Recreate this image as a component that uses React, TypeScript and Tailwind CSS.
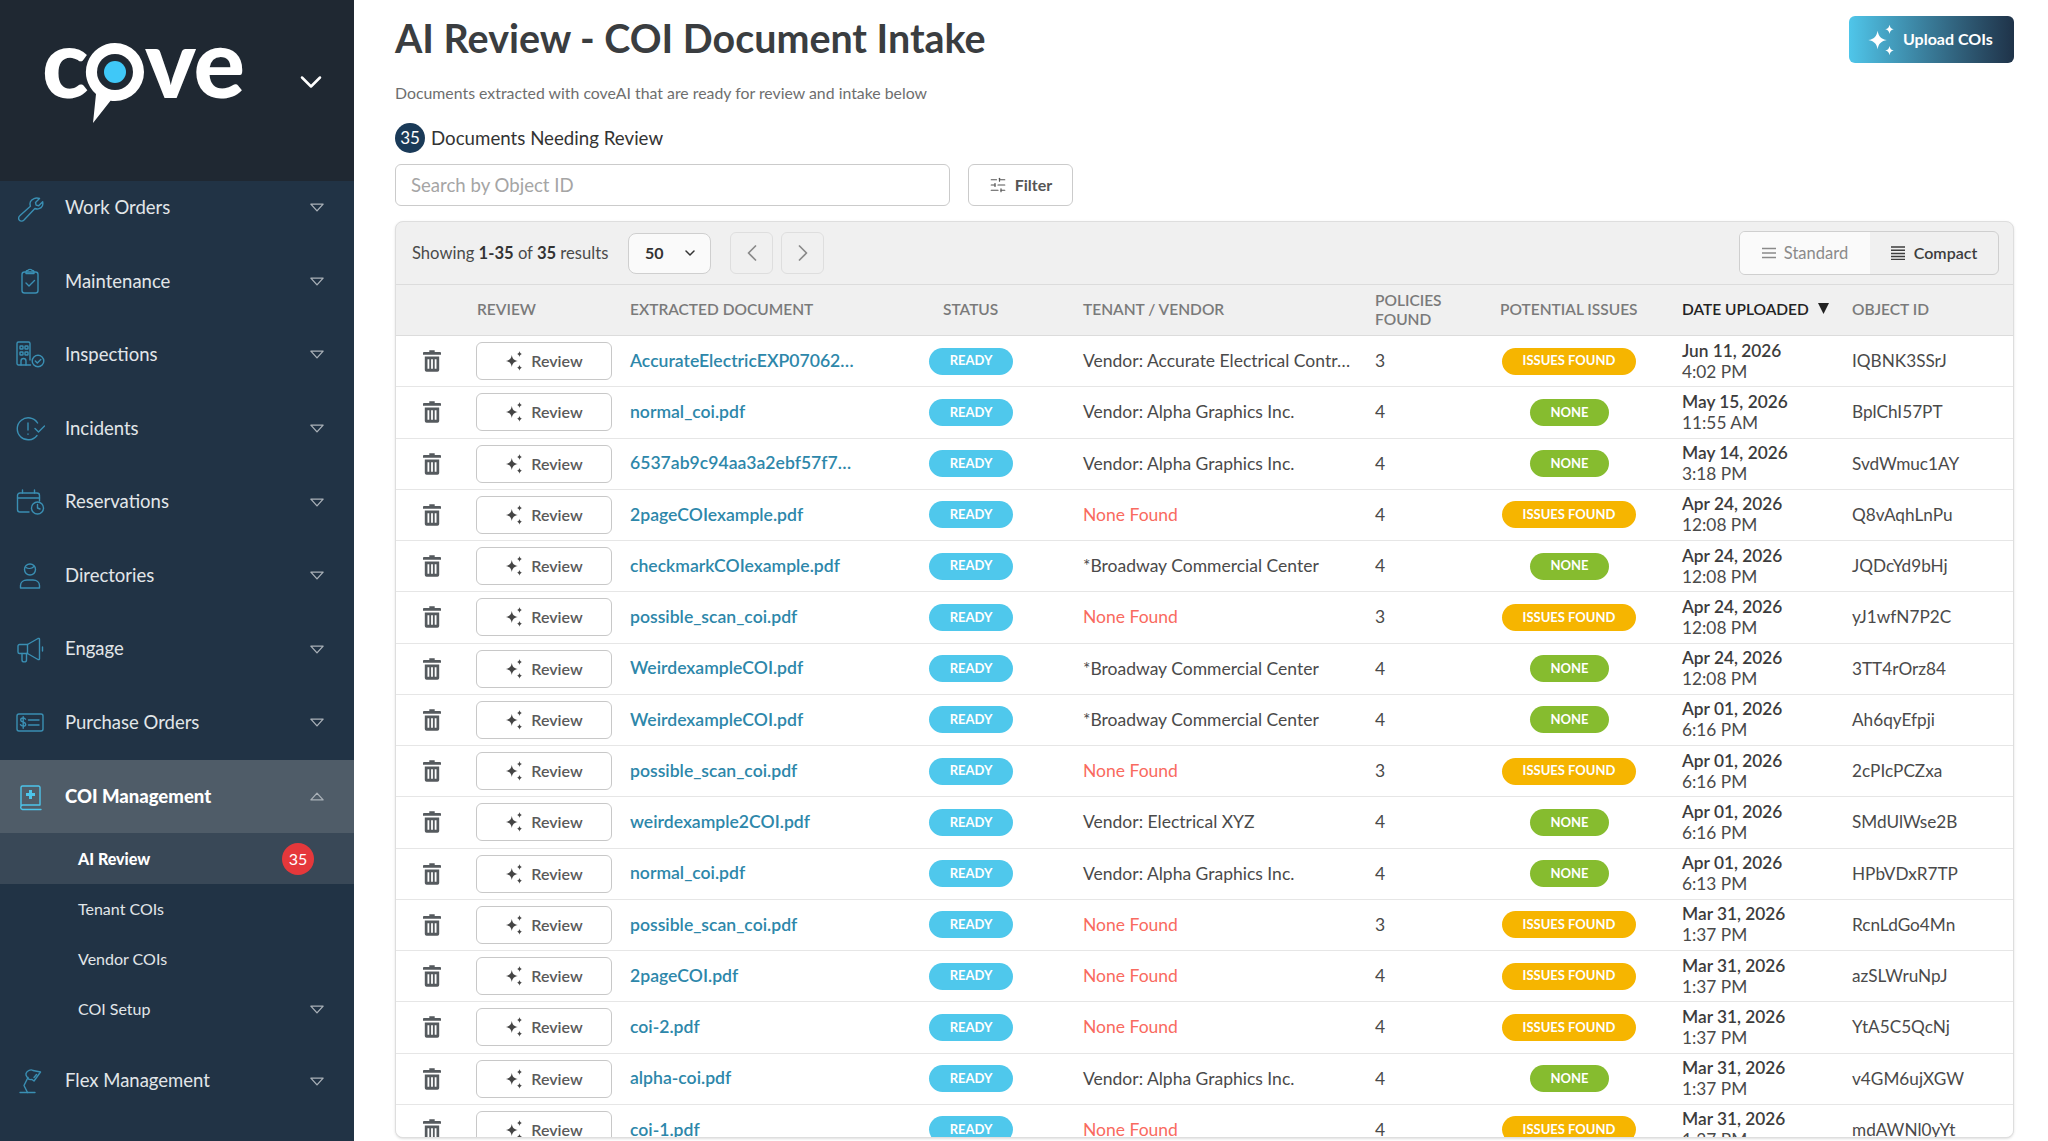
import { ChevronDown, ChevronLeft, ChevronRight, SlidersHorizontal } from "lucide-react";
import type { ReactNode } from "react";

const rows = [
  { doc: "AccurateElectricEXP07062…", vendor: "Vendor: Accurate Electrical Contr…", policies: 3, issues: true, date: "Jun 11, 2026", time: "4:02 PM", id: "IQBNK3SSrJ" },
  { doc: "normal_coi.pdf", vendor: "Vendor: Alpha Graphics Inc.", policies: 4, issues: false, date: "May 15, 2026", time: "11:55 AM", id: "BplChI57PT" },
  { doc: "6537ab9c94aa3a2ebf57f7…", vendor: "Vendor: Alpha Graphics Inc.", policies: 4, issues: false, date: "May 14, 2026", time: "3:18 PM", id: "SvdWmuc1AY" },
  { doc: "2pageCOIexample.pdf", vendor: "", policies: 4, issues: true, date: "Apr 24, 2026", time: "12:08 PM", id: "Q8vAqhLnPu" },
  { doc: "checkmarkCOIexample.pdf", vendor: "*Broadway Commercial Center", policies: 4, issues: false, date: "Apr 24, 2026", time: "12:08 PM", id: "JQDcYd9bHj" },
  { doc: "possible_scan_coi.pdf", vendor: "", policies: 3, issues: true, date: "Apr 24, 2026", time: "12:08 PM", id: "yJ1wfN7P2C" },
  { doc: "WeirdexampleCOI.pdf", vendor: "*Broadway Commercial Center", policies: 4, issues: false, date: "Apr 24, 2026", time: "12:08 PM", id: "3TT4rOrz84" },
  { doc: "WeirdexampleCOI.pdf", vendor: "*Broadway Commercial Center", policies: 4, issues: false, date: "Apr 01, 2026", time: "6:16 PM", id: "Ah6qyEfpji" },
  { doc: "possible_scan_coi.pdf", vendor: "", policies: 3, issues: true, date: "Apr 01, 2026", time: "6:16 PM", id: "2cPIcPCZxa" },
  { doc: "weirdexample2COI.pdf", vendor: "Vendor: Electrical XYZ", policies: 4, issues: false, date: "Apr 01, 2026", time: "6:16 PM", id: "SMdUlWse2B" },
  { doc: "normal_coi.pdf", vendor: "Vendor: Alpha Graphics Inc.", policies: 4, issues: false, date: "Apr 01, 2026", time: "6:13 PM", id: "HPbVDxR7TP" },
  { doc: "possible_scan_coi.pdf", vendor: "", policies: 3, issues: true, date: "Mar 31, 2026", time: "1:37 PM", id: "RcnLdGo4Mn" },
  { doc: "2pageCOI.pdf", vendor: "", policies: 4, issues: true, date: "Mar 31, 2026", time: "1:37 PM", id: "azSLWruNpJ" },
  { doc: "coi-2.pdf", vendor: "", policies: 4, issues: true, date: "Mar 31, 2026", time: "1:37 PM", id: "YtA5C5QcNj" },
  { doc: "alpha-coi.pdf", vendor: "Vendor: Alpha Graphics Inc.", policies: 4, issues: false, date: "Mar 31, 2026", time: "1:37 PM", id: "v4GM6ujXGW" },
  { doc: "coi-1.pdf", vendor: "", policies: 4, issues: true, date: "Mar 31, 2026", time: "1:37 PM", id: "mdAWNl0yYt" },
];

const gridCols = "grid grid-cols-[71px_163px_299px_154px_292px_125px_182px_170px_1fr] items-center";

function NavIcon({ children }: { children: ReactNode }) {
  return (
    <svg viewBox="0 0 30 30" fill="none" stroke="currentColor" strokeWidth="1.4" strokeLinecap="round" strokeLinejoin="round" className="w-[30px] h-[30px] shrink-0">
      {children}
    </svg>
  );
}

const icons: Record<string, ReactNode> = {
  wrench: (
    <path d="M24.5 5.500l-4 4 .6 2.600 2.600.6 4-4c.6 3-.6 6-3.600 7-1.600.5-3 .3-4.200-.2L9 27c-1.400 1.400-3.600 1.400-4.600.2-1.200-1.200-1-3.200.4-4.400l10.600-9.600c-.5-1.400-.6-3 0-4.400 1.300-3 5.400-4.600 9.100-3.300z" />
  ),
  clipboard: (
    <>
      <rect x="7" y="6" width="16" height="21" rx="2.500" />
      <path d="M11 6c0-1 .8-1.500 1.800-1.500.3-1.500 4.100-1.500 4.400 0C18.200 4.500 19 5 19 6v1.500h-8z" />
      <path d="M11 17l3 3 5.500-5.500" />
    </>
  ),
  building: (
    <>
      <path d="M15 20V3.500A1.500 1.500 0 0 0 13.500 2h-10A1.500 1.500 0 0 0 2 3.500v20A1.500 1.500 0 0 0 3.500 25h12" />
      <rect x="5" y="6" width="3" height="3" rx=".6" />
      <rect x="10" y="6" width="3" height="3" rx=".6" />
      <rect x="5" y="12" width="3" height="3" rx=".6" />
      <rect x="10" y="12" width="3" height="3" rx=".6" />
      <path d="M6 25v-4a2.500 2.500 0 0 1 5 0v4" />
      <circle cx="23" cy="21" r="5.800" />
      <path d="M20.300 21l2 2 3.500-3.500" />
    </>
  ),
  incident: (
    <>
      <path d="M22 21.500A11 11 0 1 1 22.600 9" />
      <path d="M13 9v7M13 20v.2" />
      <path d="M20 14.500l3.500 3.500 6-6" />
    </>
  ),
  calendar: (
    <>
      <path d="M14 25H5a2.500 2.500 0 0 1-2.500-2.500V8.500A2.500 2.500 0 0 1 5 6h17a2.500 2.500 0 0 1 2.500 2.500V14" />
      <path d="M7.500 3v3M19.500 3v3M2.500 11h22" />
      <circle cx="22.500" cy="21" r="6" />
      <path d="M22.500 17.500V21l2.500 1" />
    </>
  ),
  person: (
    <>
      <circle cx="15" cy="8.500" r="5.500" />
      <path d="M11 6.500c2 1.300 5.500 1.300 8-1" />
      <path d="M5.500 27v-2.500C5.500 21 8.500 19 12 19h6c3.500 0 6.500 2 6.500 5.500V27z" />
    </>
  ),
  megaphone: (
    <>
      <path d="M4.500 10.500h8L23 4.500c.8-.4 1.500 0 1.500.8v19.400c0 .8-.7 1.200-1.500.8l-10.500-6h-8A1.500 1.500 0 0 1 3 18V12a1.500 1.500 0 0 1 1.500-1.500z" />
      <path d="M12.500 10.500v9M7 19.500V26c0 2.500 4.500 2.500 4.500 0v-6.500" />
      <path d="M27.500 13v4" />
    </>
  ),
  dollar: (
    <>
      <rect x="2" y="6" width="26" height="17" rx="2" />
      <path d="M10.500 11.200c-.5-1-1.500-1.200-2.500-1.200-1.300 0-2.300.6-2.300 1.900 0 2.800 5 1.400 5 4.300 0 1.200-1 1.900-2.500 1.900-1.200 0-2.200-.5-2.700-1.400M8.200 8.800v11.400" />
      <path d="M13.500 12h10.500M13.500 17h10.500" />
    </>
  ),
  book: (
    <>
      <path d="M6 24V5.500A1.500 1.500 0 0 1 7.500 4h16A1.500 1.500 0 0 1 25 5.500V23H7.500a2.300 2.300 0 0 0 0 4.500H26" />
      <path d="M15.500 8v9M11 12.500h9" strokeWidth="3" strokeLinecap="butt" />
    </>
  ),
  lamp: (
    <>
      <path d="M5 26.500h15" />
      <path d="M12.500 26.500l-3.500-7 4-8" />
      <path d="M11 7.500c1-3 5-4.500 7-3l7.500 1.500-6.500 9-2-1.500c-2 .5-4-.5-5-2.500-.7-1-1.300-2.500-1-3.500z" />
      <path d="M19 11.500l2.500-3" />
    </>
  ),
};

function Caret({ up = false }: { up?: boolean }) {
  return (
    <svg viewBox="0 0 16 10" className={`w-[14px] h-[9px] shrink-0 ${up ? "rotate-180" : ""}`} fill="none" stroke="#aab1b8" strokeWidth="1.5">
      <path d="M1 1.200h14L8 8.800z" strokeLinejoin="round" />
    </svg>
  );
}

function Sparkles({ className = "" }: { className?: string }) {
  return (
    <svg viewBox="0 0 20 20" fill="currentColor" className={className}>
      <path d="M8 4.500c.6 3.400 2.100 4.900 5.500 5.500-3.400.6-4.900 2.100-5.500 5.500-.6-3.400-2.100-4.900-5.500-5.500 3.400-.6 4.900-2.100 5.500-5.500z" />
      <path d="M15 1c.3 1.700 1 2.400 2.500 2.700-1.500.3-2.200 1-2.500 2.700-.3-1.700-1-2.400-2.500-2.700 1.500-.3 2.200-1 2.500-2.700z" />
      <path d="M15 13.500c.3 1.700 1 2.400 2.500 2.700-1.500.3-2.200 1-2.500 2.700-.3-1.700-1-2.400-2.500-2.700 1.500-.3 2.200-1 2.500-2.700z" />
    </svg>
  );
}

function Trash() {
  return (
    <svg viewBox="0 0 20 24" className="w-[18px] h-[22px] mx-auto" fill="#555a5e">
      <path d="M7 0h6v2h6a1 1 0 0 1 1 1v2H0V3a1 1 0 0 1 1-1h6z" />
      <path fillRule="evenodd" d="M2 7h16v15a2 2 0 0 1-2 2H4a2 2 0 0 1-2-2zm3 3v10.500h2V10zm4 0v10.500h2V10zm4 0v10.500h2V10z" />
    </svg>
  );
}

function NavItem({ icon, label, active = false }: { icon: string; label: string; active?: boolean }) {
  return (
    <div className={`h-[73.6px] flex items-center pl-[15px] pr-[30px] ${active ? "bg-[#4f5c68] text-white font-black" : "text-[#e2e6e9]"}`}>
      <span className={active ? "text-[#4dc4ea]" : "text-[#3a8fb3]"}>
        <NavIcon>{icons[icon]}</NavIcon>
      </span>
      <span className="ml-5 flex-1 text-[18.500px]">{label}</span>
      <Caret up={active} />
    </div>
  );
}

function Logo() {
  return (
    <div className="flex items-start text-white font-black text-[96px] leading-[116px] shrink-0">
      <span className="w-[43px] -ml-[2px] mt-[3px]">c</span>
      <svg viewBox="0 0 60 82" className="w-[60px] h-[82px] mt-[42px] shrink-0">
        <path d="M30 1a29 29 0 0 1 0 58c-1.500 0-3-.1-4.500-.3L8 81l3-29A29 29 0 0 1 30 1z" fill="#fff" />
        <circle cx="30" cy="30" r="18" fill="#1f2832" />
        <circle cx="30" cy="30" r="11" fill="#3fc8f8" />
      </svg>
      <span className="mt-[3px] tracking-[-1px]">ve</span>
    </div>
  );
}

function Sidebar() {
  return (
    <aside className="w-[354px] shrink-0 h-full bg-[#213345] overflow-hidden flex flex-col">
      <div className="relative z-10 h-[181px] shrink-0 bg-[#1f2832] flex items-start pl-[44px] pr-[25px]">
        <Logo />
        <ChevronDown className="ml-auto mt-[64px] w-9 h-9 text-white" strokeWidth={1.700} />
      </div>
      <div className="-mt-[10px]">
        <NavItem icon="wrench" label="Work Orders" />
        <NavItem icon="clipboard" label="Maintenance" />
        <NavItem icon="building" label="Inspections" />
        <NavItem icon="incident" label="Incidents" />
        <NavItem icon="calendar" label="Reservations" />
        <NavItem icon="person" label="Directories" />
        <NavItem icon="megaphone" label="Engage" />
        <NavItem icon="dollar" label="Purchase Orders" />
        <NavItem icon="book" label="COI Management" active />
        <div className="text-[16px] text-[#e2e6e9]">
          <div className="h-[51px] bg-[#394857] flex items-center pl-[78px] pr-[40px] font-black text-white">
            <span className="flex-1">AI Review</span>
            <span className="w-8 h-8 rounded-full bg-[#e5383b] flex items-center justify-center font-normal">35</span>
          </div>
          <div className="h-[50px] flex items-center pl-[78px]">Tenant COIs</div>
          <div className="h-[50px] flex items-center pl-[78px]">Vendor COIs</div>
          <div className="h-[50px] flex items-center pl-[78px] pr-[30px]">
            <span className="flex-1">COI Setup</span>
            <Caret />
          </div>
        </div>
        <div className="mt-[10px]">
          <NavItem icon="lamp" label="Flex Management" />
        </div>
      </div>
    </aside>
  );
}

function Toolbar() {
  return (
    <div className="h-[63px] shrink-0 flex items-center pl-[16px] pr-[14px] border-b border-[#dcdcdc]">
      <span className="text-[16.600px] text-[#4a4a4a] w-[216px] whitespace-nowrap">
        Showing <b className="font-bold text-[#333]">1-35</b> of <b className="font-bold text-[#333]">35</b> results
      </span>
      <div className="w-[83px] h-[41px] rounded-lg border border-[#cfcfcf] bg-[#fafafa] flex items-center justify-between pl-4 pr-3 font-bold text-[16px] text-[#333]">
        50
        <ChevronDown className="w-4 h-4" strokeWidth={2.200} />
      </div>
      <button className="ml-[19px] w-[43px] h-[42px] rounded-md border border-[#dedede] flex items-center justify-center text-[#8a8a8a]">
        <ChevronLeft className="w-7 h-7" strokeWidth={1.500} />
      </button>
      <button className="ml-2 w-[43px] h-[42px] rounded-md border border-[#dedede] flex items-center justify-center text-[#8a8a8a]">
        <ChevronRight className="w-7 h-7" strokeWidth={1.500} />
      </button>
      <div className="ml-auto w-[260px] h-[44px] rounded-md border border-[#cfcfcf] flex overflow-hidden">
        <div className="w-[130px] bg-[#fafafa] flex items-center justify-center gap-[8px] text-[#8a8a8a] text-[16.500px]">
          <svg viewBox="0 0 14 12" className="w-[14px] h-[12px]" stroke="currentColor" strokeWidth="1.500"><path d="M0 1.500h14M0 6h14M0 10.500h14" /></svg>
          Standard
        </div>
        <div className="flex-1 flex items-center justify-center gap-[9px] text-[#3d3d3d] font-semibold text-[16px]">
          <svg viewBox="0 0 14 14" className="w-[14px] h-[14px]" stroke="currentColor" strokeWidth="1.500"><path d="M0 1h14M0 4.200h14M0 7.400h14M0 10.600h14M0 13.500h14" /></svg>
          Compact
        </div>
      </div>
    </div>
  );
}

function TableHeader() {
  const cell = "text-[15.500px] text-[#7a7a7a] font-semibold uppercase whitespace-nowrap";
  return (
    <div className={`${gridCols} h-[51px] shrink-0 border-b border-[#dcdcdc]`}>
      <span />
      <span className={`${cell} pl-[10px]`}>Review</span>
      <span className={cell}>Extracted Document</span>
      <span className={`${cell} pl-[14px]`}>Status</span>
      <span className={cell}>Tenant / Vendor</span>
      <span className={`${cell} leading-[19px]`}>Policies<br />Found</span>
      <span className={cell}>Potential Issues</span>
      <span className={`${cell} !text-[#222] flex items-center`}>
        Date Uploaded
        <svg viewBox="0 0 10 10" className="w-[11px] h-[11px] ml-[9px] -mt-[4px]" fill="#222"><path d="M0 0h10L5 10z" /></svg>
      </span>
      <span className={cell}>Object ID</span>
    </div>
  );
}

function Row({ row }: { row: (typeof rows)[number] }) {
  return (
    <div className={`${gridCols} h-[51.250px] shrink-0 bg-white border-b border-[#e6e6e6] text-[17.500px] text-[#4a4a4a]`}>
      <div><Trash /></div>
      <div className="pl-[9px]">
        <button className="w-[136px] h-[38px] rounded-md border border-[#c8c8c8] bg-white flex items-center justify-center gap-[6px] pr-[2px] text-[16px] font-semibold text-[#5a5a5a]">
          <Sparkles className="w-[22px] h-[22px] text-[#444]" />
          Review
        </button>
      </div>
      <a className="font-semibold text-[#2d87aa] whitespace-nowrap text-[17.600px]">{row.doc}</a>
      <div>
        <span className="w-[84px] h-[27px] rounded-full bg-[#4fc8ec] text-white text-[13px] font-bold flex items-center justify-center">READY</span>
      </div>
      {row.vendor ? (
        <span className="whitespace-nowrap">{row.vendor}</span>
      ) : (
        <span className="text-[#f96a60]">None Found</span>
      )}
      <span>{row.policies}</span>
      <div className="pl-[2px]">
        {row.issues ? (
          <span className="w-[134px] h-[27px] rounded-full bg-[#f6b500] text-white text-[13px] font-bold flex items-center justify-center">ISSUES FOUND</span>
        ) : (
          <span className="ml-[28px] w-[79px] h-[27px] rounded-full bg-[#86bc2f] text-white text-[13px] font-bold flex items-center justify-center">NONE</span>
        )}
      </div>
      <div className="leading-[21px] text-[17.300px] -mt-[1px]">
        <div className="font-semibold text-[#3c3c3c]">{row.date}</div>
        <div>{row.time}</div>
      </div>
      <span className="text-[17.200px]">{row.id}</span>
    </div>
  );
}

export default function App() {
  return (
    <div className="w-[2048px] h-[1141px] flex overflow-hidden bg-white font-['Lato',sans-serif]">
      <Sidebar />
      <main className="flex-1 h-full flex flex-col pl-[41px] pr-[34px] pb-[3px] overflow-hidden">
        <div className="h-[79px] shrink-0 flex items-start justify-between pt-4">
          <h1 className="text-[39.400px] leading-[45px] font-bold text-[#3a3d40] -mt-[1px]">AI Review - COI Document Intake</h1>
          <button className="w-[165px] h-[47px] rounded-md bg-gradient-to-r from-[#4fc6ea] to-[#1f3349] text-white font-bold text-[16px] flex items-center pl-[15px] gap-[5px] pb-[2px]">
            <Sparkles className="w-[34px] h-[34px] mt-[2px]" />
            Upload COIs
          </button>
        </div>
        <p className="h-[28px] shrink-0 flex items-center text-[15.850px] text-[#6e6e6e]">Documents extracted with coveAI that are ready for review and intake below</p>
        <div className="mt-[16px] h-[30px] shrink-0 flex items-center gap-[6px] text-[18.700px] text-[#333]">
          <span className="w-[30px] h-[30px] rounded-full bg-[#1a3a58] text-white flex items-center justify-center text-[17px]">35</span>
          Documents Needing Review
        </div>
        <div className="mt-[11px] h-[42px] shrink-0 flex gap-[18px]">
          <input placeholder="Search by Object ID" readOnly className="w-[555px] h-full rounded-md border border-[#cbcbcb] px-[15px] text-[18.600px] placeholder:text-[#a5a5a5] outline-none" />
          <button className="w-[105px] h-full rounded-md border border-[#cbcbcb] flex items-center justify-center gap-[8px] text-[16px] font-bold text-[#555]">
            <SlidersHorizontal className="w-[18px] h-[18px]" strokeWidth={1.600} />
            Filter
          </button>
        </div>
        <section className="mt-[15px] flex-1 min-h-0 flex flex-col rounded-lg border border-[#dedede] bg-[#f0f0f0] overflow-hidden shadow-sm">
          <Toolbar />
          <TableHeader />
          {rows.map((row, i) => (
            <Row key={i} row={row} />
          ))}
        </section>
      </main>
    </div>
  );
}
